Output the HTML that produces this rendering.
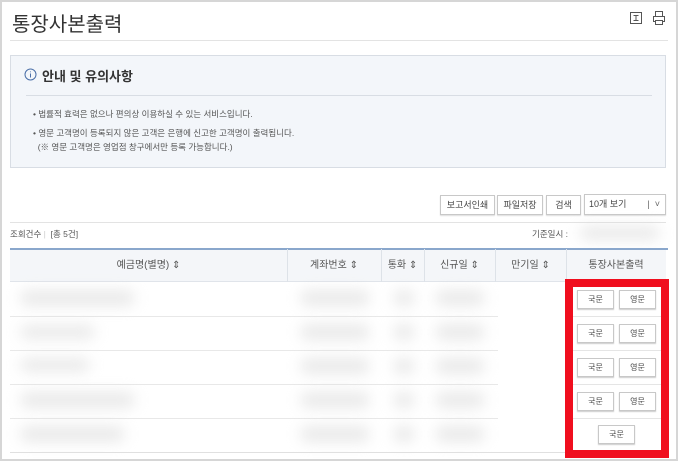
<!DOCTYPE html>
<html><head><meta charset="utf-8"><style>
*{margin:0;padding:0;box-sizing:border-box}
body{width:678px;height:461px;overflow:hidden;background:#fff;font-family:"Liberation Sans","Noto Sans CJK KR",sans-serif;color:#333;position:relative}
.frame{position:absolute;inset:0;border:2px solid #d6d6d6}
.abs{position:absolute}
.btn{position:absolute;border:1px solid #c8c8c8;background:#fff;font-size:9px;color:#444;text-align:center;line-height:18px;box-shadow:0 1px 1px #ddd}
.blob{position:absolute;background:#d8d8d8;filter:blur(7px);border-radius:8px;opacity:.55}
.th{position:absolute;top:249px;height:33px;line-height:33px;font-size:10px;color:#555;text-align:center}
.sep{position:absolute;top:249px;height:33px;width:1px;background:#dde2e8}
.rl{position:absolute;left:10px;width:488px;height:1px;background:#e8e8e8}
.sb{position:absolute;left:10px;width:656px;height:1px;background:#e0e0e0}
.kb{position:absolute;width:37px;height:19px;border:1px solid #c8c8c8;background:#fff;font-size:8px;line-height:17px;text-align:center;color:#444;box-shadow:0 1px 1px #ccc}
</style></head><body>
<div class="frame"></div>
<div class="abs" style="left:12px;top:8px;font-size:20px;color:#333">통장사본출력</div>
<svg class="abs" style="left:629px;top:11px" width="14" height="14" viewBox="0 0 14 14"><rect x="1.5" y="1.5" width="11" height="11" fill="none" stroke="#555"/><path d="M4.5 4.5h5M7 4.5v5M4.5 9.5h5" stroke="#555" fill="none"/></svg>
<svg class="abs" style="left:652px;top:10px" width="14" height="16" viewBox="0 0 14 16"><rect x="3.5" y="1.5" width="7" height="5" fill="none" stroke="#555"/><rect x="1.5" y="6.5" width="11" height="5" fill="none" stroke="#555"/><rect x="3.5" y="10.5" width="7" height="4" fill="#fff" stroke="#555"/></svg>
<div class="abs" style="left:10px;top:40px;width:658px;height:1px;background:#e3e3e3"></div>
<div class="abs" style="left:10px;top:55px;width:656px;height:113px;background:#f3f6fa;border:1px solid #d8dde4"></div>
<svg class="abs" style="left:24px;top:68px" width="13" height="13" viewBox="0 0 13 13"><circle cx="6.5" cy="6.5" r="5.5" fill="none" stroke="#4a6fa8"/><path d="M6.5 5.5v4M6.5 3.5v.8" stroke="#4a6fa8" fill="none"/></svg>
<div class="abs" style="left:42px;top:66px;font-size:13px;font-weight:bold;color:#333">안내 및 유의사항</div>
<div class="abs" style="left:26px;top:95px;width:626px;height:1px;background:#d8dde4"></div>
<div class="abs" style="left:33px;top:107px;font-size:8.5px;color:#555;line-height:14px">• 법률적 효력은 없으나 편의상 이용하실 수 있는 서비스입니다.</div>
<div class="abs" style="left:33px;top:126px;font-size:8.5px;color:#555;line-height:14px">• 영문 고객명이 등록되지 않은 고객은 은행에 신고한 고객명이 출력됩니다.<br>&nbsp;&nbsp;(※ 영문 고객명은 영업점 창구에서만 등록 가능합니다.)</div>
<div class="btn" style="left:440px;top:195px;width:55px;height:20px">보고서인쇄</div>
<div class="btn" style="left:497px;top:195px;width:46px;height:20px">파일저장</div>
<div class="btn" style="left:546px;top:195px;width:35px;height:20px">검색</div>
<div class="btn" style="left:584px;top:194px;width:82px;height:21px;text-align:left;padding-left:4px">10개 보기<span style="position:absolute;right:5px;color:#666">|&nbsp; ˅</span></div>
<div class="abs" style="left:10px;top:222px;width:656px;height:1px;background:#e3e3e3"></div>
<div class="abs" style="left:10px;top:228px;font-size:8.5px;color:#555">조회건수 <span style="color:#ccc">|</span>&nbsp; [총 5건]</div>
<div class="abs" style="left:532px;top:228px;font-size:8.5px;color:#555">기준일시 :</div>
<div class="blob" style="left:580px;top:226px;width:80px;height:14px"></div>
<div class="abs" style="left:10px;top:248px;width:658px;height:2px;background:#8aa7cc"></div>
<div class="abs" style="left:10px;top:250px;width:656px;height:32px;background:#f4f6f9;border-bottom:1px solid #e0e4ea"></div>
<div class="th" style="left:10px;width:277px">예금명(별명) ⇕</div>
<div class="th" style="left:287px;width:94px">계좌번호 ⇕</div>
<div class="th" style="left:381px;width:43px">통화 ⇕</div>
<div class="th" style="left:424px;width:71px">신규일 ⇕</div>
<div class="th" style="left:495px;width:71px">만기일 ⇕</div>
<div class="th" style="left:566px;width:100px">통장사본출력</div>
<div class="sep" style="left:287px"></div><div class="sep" style="left:381px"></div><div class="sep" style="left:424px"></div><div class="sep" style="left:495px"></div><div class="sep" style="left:566px"></div>
<div class="rl" style="top:316px"></div><div class="rl" style="top:350px"></div><div class="rl" style="top:384px"></div><div class="rl" style="top:418px"></div>
<div class="sb" style="top:452px"></div>
<div class="blob" style="left:20px;top:290px;width:115px;height:16px"></div>
<div class="blob" style="left:20px;top:325px;width:75px;height:14px"></div>
<div class="blob" style="left:20px;top:358px;width:70px;height:14px"></div>
<div class="blob" style="left:20px;top:392px;width:115px;height:16px"></div>
<div class="blob" style="left:20px;top:426px;width:105px;height:16px"></div>
<div class="blob" style="left:300px;top:290px;width:70px;height:16px"></div>
<div class="blob" style="left:300px;top:324px;width:70px;height:16px"></div>
<div class="blob" style="left:300px;top:358px;width:70px;height:16px"></div>
<div class="blob" style="left:300px;top:392px;width:70px;height:16px"></div>
<div class="blob" style="left:300px;top:426px;width:70px;height:16px"></div>
<div class="blob" style="left:393px;top:290px;width:22px;height:16px"></div>
<div class="blob" style="left:393px;top:324px;width:22px;height:16px"></div>
<div class="blob" style="left:393px;top:358px;width:22px;height:16px"></div>
<div class="blob" style="left:393px;top:392px;width:22px;height:16px"></div>
<div class="blob" style="left:393px;top:426px;width:22px;height:16px"></div>
<div class="blob" style="left:435px;top:290px;width:50px;height:16px"></div>
<div class="blob" style="left:435px;top:324px;width:50px;height:16px"></div>
<div class="blob" style="left:435px;top:358px;width:50px;height:16px"></div>
<div class="blob" style="left:435px;top:392px;width:50px;height:16px"></div>
<div class="blob" style="left:435px;top:426px;width:50px;height:16px"></div>
<div class="abs" style="left:570px;top:350px;width:92px;height:1px;background:#e5e5e5"></div>
<div class="abs" style="left:570px;top:384px;width:92px;height:1px;background:#e5e5e5"></div>
<div class="abs" style="left:570px;top:418px;width:92px;height:1px;background:#e5e5e5"></div>
<div class="abs" style="left:570px;top:316px;width:92px;height:1px;background:#e5e5e5"></div>
<div class="kb" style="left:577px;top:290px">국문</div><div class="kb" style="left:619px;top:290px">영문</div>
<div class="kb" style="left:577px;top:324px">국문</div><div class="kb" style="left:619px;top:324px">영문</div>
<div class="kb" style="left:577px;top:358px">국문</div><div class="kb" style="left:619px;top:358px">영문</div>
<div class="kb" style="left:577px;top:392px">국문</div><div class="kb" style="left:619px;top:392px">영문</div>
<div class="kb" style="left:598px;top:425px">국문</div>
<div class="abs" style="left:565px;top:279px;width:104px;height:179px;border:8px solid #f00e1e"></div>
</body></html>
